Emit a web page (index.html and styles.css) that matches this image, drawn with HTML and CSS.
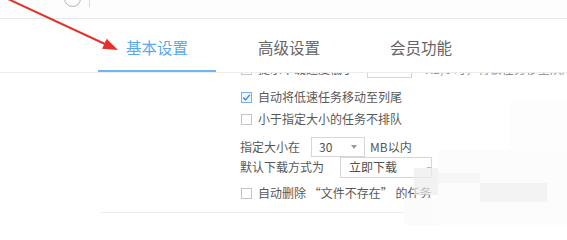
FILE: index.html
```html
<!DOCTYPE html>
<html lang="zh-CN">
<head>
<meta charset="utf-8">
<title>基本设置</title>
<link rel="stylesheet" href="styles.css">
</head>
<body>
<div class="page">
  <div class="topbar">
    <span class="circle-btn"></span>
    <span class="top-divider"></span>
  </div>
  <div class="tabs">
    <div class="tab active">基本设置</div>
    <div class="tab">高级设置</div>
    <div class="tab">会员功能</div>
  </div>
  <div class="content">
    <div class="rows">
      <div class="row row-first">
        <span class="checkbox"></span>
        <span class="label">提示下载速度低于</span>
        <span class="input-box"></span>
        <span class="label faded">KB/s 时，将该任务移至队尾并开始下一个任务</span>
      </div>
      <div class="row row-second">
        <span class="checkbox checked">
          <svg viewBox="0 0 11 11" width="11" height="11"><path d="M2.2 5.6 L4.5 7.9 L8.9 2.8" fill="none" stroke="#4a8fdb" stroke-width="1.5"/></svg>
        </span>
        <span class="label">自动将低速任务移动至列尾</span>
      </div>
      <div class="row">
        <span class="checkbox"></span>
        <span class="label">小于指定大小的任务不排队</span>
      </div>
      <div class="row row-size">
        <span class="label plain">指定大小在</span>
        <span class="select select-size"><span class="select-text">30</span><span class="caret"></span></span>
        <span class="label plain unit">MB以内</span>
      </div>
      <div class="row row-mode">
        <span class="label plain">默认下载方式为</span>
        <span class="select select-mode"><span class="select-text">立即下载</span><span class="dash"></span></span>
      </div>
      <div class="row row-last">
        <span class="checkbox"></span>
        <span class="label">自动删除 “文件不存在” 的任务</span>
      </div>
    </div>
    <div class="footer-line"></div>
  </div>

  <div class="mosaic m1"></div>
  <div class="mosaic m2"></div>
  <div class="mosaic m3"></div>
  <div class="mosaic m4"></div>
  <div class="mosaic m5"></div>
  <div class="mosaic m6"></div>

  <svg class="arrow" width="140" height="60" viewBox="0 0 140 60">
    <line x1="8" y1="-1" x2="106" y2="44.5" stroke="#e3322c" stroke-width="2"/>
    <polygon points="118,50 102.1,48.7 106.7,38.7" fill="#e3322c"/>
  </svg>
</div>
</body>
</html>
```

FILE: styles.css
```css
html, body {
  margin: 0;
  padding: 0;
  background: #ffffff;
}

body {
  font-family: "Noto Sans CJK SC", "Noto Sans", sans-serif;
  color: #555555;
}

.page {
  position: relative;
  width: 567px;
  height: 225px;
  overflow: hidden;
  background: #ffffff;
}

/* top bar */
.topbar {
  height: 18px;
  border-bottom: 1px solid #e9e9e9;
  display: flex;
  align-items: flex-start;
  background: #fdfdfd;
}

.circle-btn {
  width: 15px;
  height: 15px;
  border: 1.5px solid #b4b4b4;
  border-radius: 50%;
  margin-left: 64px;
  margin-top: -10px;
  flex: none;
}

.top-divider {
  width: 1px;
  height: 7px;
  background: #d8d8d8;
  margin-left: 8px;
  flex: none;
}

/* tabs */
.tabs {
  display: flex;
  gap: 14px;
  padding-left: 98px;
  height: 53px;
  border-bottom: 1px solid #ececec;
}

.tab {
  box-sizing: border-box;
  height: 53px;
  padding: 17px 28px 0;
  font-size: 15.5px;
  line-height: 22px;
  color: #666666;
  border-bottom: 2px solid transparent;
  white-space: nowrap;
}

.tab.active {
  color: #5ba7f0;
  border-bottom-color: #72b3f1;
}

/* content */
.content {
  height: 152px;
  overflow: hidden;
}

.rows {
  margin-left: 240px;
  display: flex;
  flex-direction: column;
}

.row {
  display: flex;
  align-items: center;
  height: 22px;
  font-size: 12px;
  white-space: nowrap;
}

.row-first {
  margin-top: -15px;
}

.row-second {
  margin-top: 6px;
}

.row-size {
  margin-top: 6px;
}

.row-mode {
  margin-top: -2px;
}

.row-last {
  margin-top: 4px;
}

.checkbox {
  box-sizing: border-box;
  width: 11px;
  height: 11px;
  border: 1px solid #c4c4c4;
  background: #ffffff;
  margin-left: 1px;
  margin-right: 6px;
  flex: none;
  display: flex;
}

.checkbox.checked {
  border-color: #78aee3;
  background: #f1f7fe;
}

.checkbox.checked svg {
  margin: -1px;
}

.label {
  color: #585858;
  line-height: 22px;
}

.label.faded {
  color: #8a8a8a;
  margin-left: 13px;
}

.input-box {
  box-sizing: border-box;
  width: 45px;
  height: 18px;
  border: 1px solid #d4d4d4;
  background: #fff;
  margin-left: 13px;
  flex: none;
}

.select {
  box-sizing: border-box;
  display: flex;
  align-items: center;
  height: 20px;
  border: 1px solid #d6d6d6;
  background: #ffffff;
  flex: none;
}

.select-text {
  color: #505050;
  font-size: 12px;
  line-height: 18px;
}

.select-size {
  width: 54px;
  margin-left: 11px;
  padding-left: 7px;
}

.caret {
  width: 0;
  height: 0;
  border-left: 3.5px solid transparent;
  border-right: 3.5px solid transparent;
  border-top: 4px solid #9a9a9a;
  margin-left: 19px;
}

.unit {
  margin-left: 5px;
}

.select-mode {
  width: 92px;
  height: 21px;
  margin-left: 16px;
  padding-left: 8px;
}

.dash {
  width: 6px;
  height: 1px;
  background: #b8b8b8;
  margin-left: 30px;
}

.footer-line {
  margin-top: 8px;
  margin-left: 101px;
  height: 1px;
  background: #ededed;
}

/* blurred mosaic patch over the lower-right corner */
.mosaic {
  position: absolute;
}

.m1 {
  left: 414px;
  top: 168px;
  width: 24px;
  height: 27px;
  background: rgba(236, 236, 236, 0.7);
}

.m2 {
  left: 438px;
  top: 150px;
  width: 129px;
  height: 75px;
  background: #fcfcfc;
}

.m3 {
  left: 480px;
  top: 183px;
  width: 67px;
  height: 19px;
  background: #f3f3f3;
}

.m4 {
  left: 404px;
  top: 198px;
  width: 34px;
  height: 27px;
  background: #fbfbfb;
}

.m5 {
  left: 438px;
  top: 173px;
  width: 42px;
  height: 10px;
  background: #f6f6f6;
}

.m6 {
  left: 510px;
  top: 100px;
  width: 57px;
  height: 50px;
  background: #fdfdfd;
}

.arrow {
  position: absolute;
  left: 0;
  top: 0;
  overflow: visible;
}
```
